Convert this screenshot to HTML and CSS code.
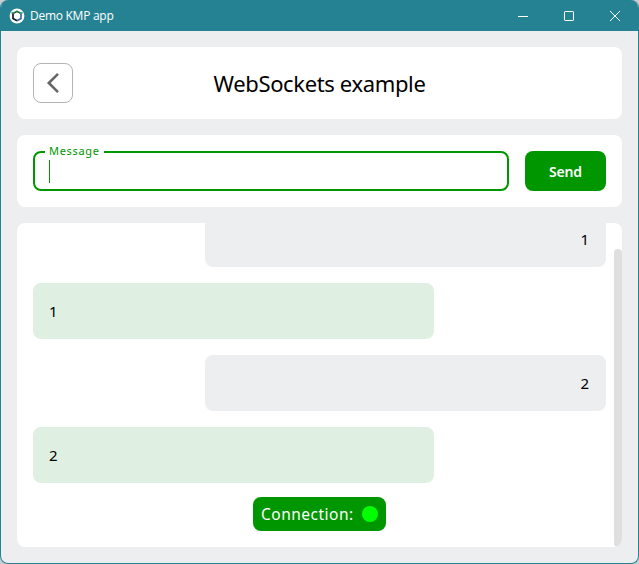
FILE: index.html
```html
<!DOCTYPE html>
<html lang="en">
<head>
<meta charset="utf-8">
<title>Demo KMP app</title>
<link rel="stylesheet" href="styles.css">
</head>
<body>
<div class="window">
  <header class="titlebar">
    <svg class="app-icon" width="16" height="16" viewBox="0 0 16 16">
      <circle cx="8" cy="8" r="7.4" fill="#fff"/>
      <g fill="none" stroke-width="1.7">
        <path d="M4 5.2 8 3.1l4 2.1" stroke="#35a865"/>
        <path d="M4 4.8v5.6l4 2.4" stroke="#111b24"/>
        <path d="M12 4.8v5.6l-4 2.4" stroke="#3b6aa8"/>
        <path d="M5 5.2 8 3.8l3 1.4" stroke="#182b2a" stroke-width=".8"/>
      </g>
      <path d="M2.2 4.8h3M10.8 4.8h3" stroke="#35a865" stroke-width="1.2"/>
    </svg>
    <span class="app-name">Demo KMP app</span>
    <div class="controls">
      <svg width="10" height="10" viewBox="0 0 10 10"><path d="M0 5.5h10"/></svg>
      <svg width="10" height="10" viewBox="0 0 10 10"><rect x=".5" y=".5" width="9" height="9" rx=".6"/></svg>
      <svg width="10" height="10" viewBox="0 0 10 10"><path d="M0 0l10 10M10 0L0 10"/></svg>
    </div>
  </header>
  <main class="content">
    <section class="card heading">
      <button class="back" aria-label="Back">
        <svg width="38" height="38" viewBox="0 0 38 38"><path d="M24 9.8 14.8 19l9.2 9.2"/></svg>
      </button>
      <h1>WebSockets example</h1>
    </section>
    <section class="card composer">
      <div class="field">
        <span class="label">Message</span>
        <span class="caret"></span>
      </div>
      <button class="send">Send</button>
    </section>
    <section class="card chat">
      <div class="bubble sent">1</div>
      <div class="bubble received">1</div>
      <div class="bubble sent">2</div>
      <div class="bubble received">2</div>
      <div class="scrollbar"></div>
      <div class="status"><span>Connection:</span><i class="dot"></i></div>
    </section>
  </main>
</div>
</body>
</html>
```
FILE: styles.css
```css
* { box-sizing: border-box; }
body {
  margin: 0;
  background: #c9cdd0;
  font-family: "Noto Sans", "Open Sans", sans-serif;
  color: #000;
}
button { font-family: inherit; padding: 0; }
.window {
  width: 639px;
  height: 564px;
  display: flex;
  flex-direction: column;
  background: #edeef0;
  border: 1px solid #258292;
  border-top: 0;
  border-radius: 8px;
  overflow: hidden;
}
.titlebar {
  flex: none;
  height: 31px;
  display: flex;
  align-items: center;
  padding: 0 18px 0 8px;
  background: #258292;
  color: #fff;
}
.app-icon { margin-right: 5px; }
.app-name { font-family: "Open Sans", sans-serif; font-size: 12px; letter-spacing: -.27px; }
.controls { margin-left: auto; display: flex; gap: 36px; }
.controls svg { display: block; fill: none; stroke: #fff; }
.content {
  flex: 1;
  min-height: 0;
  display: flex;
  flex-direction: column;
  gap: 16px;
  padding: 16px;
}
.card { background: #fff; border-radius: 8px; padding: 16px; flex: none; }
.heading {
  height: 72px;
  display: grid;
  grid-template-columns: 40px 1fr 40px;
  align-items: center;
}
.back {
  width: 40px;
  height: 40px;
  background: #fff;
  border: 1px solid #b4b4b4;
  border-radius: 8px;
}
.back svg { display: block; fill: none; stroke: #666; stroke-width: 2.6; }
h1 {
  margin: 0;
  text-align: center;
  font-size: 22px;
  line-height: 30px;
  font-weight: 400;
  letter-spacing: -.36px;
}
.composer { height: 72px; display: flex; gap: 16px; }
.field {
  position: relative;
  flex: 1;
  border: 2px solid #009600;
  border-radius: 8px;
  padding: 7px 14px;
}
.label {
  position: absolute;
  left: 10px;
  top: -9px;
  width: 59px;
  padding-left: 4px;
  background: #fff;
  color: #009600;
  font-size: 11px;
  line-height: 14px;
  letter-spacing: .68px;
}
.caret { display: block; width: 1px; height: 23px; background: #009600; }
.send {
  width: 81px;
  border: 0;
  border-radius: 8px;
  background: #009600;
  color: #fff;
  font-size: 14px;
  font-weight: 600;
  letter-spacing: -.2px;
}
.chat {
  position: relative;
  flex: 1;
  min-height: 0;
  display: flex;
  flex-direction: column;
  gap: 16px;
  padding-top: 0;
  overflow: hidden;
}
.bubble {
  flex: none;
  width: 401px;
  height: 56px;
  line-height: 56px;
  padding: 0 16px;
  border-radius: 8px;
  font-size: 15px;
}
.bubble:first-child { margin-top: -12px; }
.sent { align-self: flex-end; padding-right: 17px; background: #edeef0; text-align: right; }
.received { background: #dfefe1; }
.scrollbar {
  position: absolute;
  right: 0;
  top: 26px;
  bottom: 0;
  width: 8px;
  border-radius: 4px;
  background: #dfdfdf;
}
.status {
  position: absolute;
  left: 236px;
  bottom: 16px;
  width: 133px;
  height: 34px;
  display: flex;
  align-items: center;
  justify-content: space-between;
  padding: 0 8px;
  border-radius: 8px;
  background: #009600;
  color: #fff;
  font-size: 15.5px;
  letter-spacing: .5px;
}
.dot { width: 16px; height: 16px; border-radius: 50%; background: #0f0; }
```
